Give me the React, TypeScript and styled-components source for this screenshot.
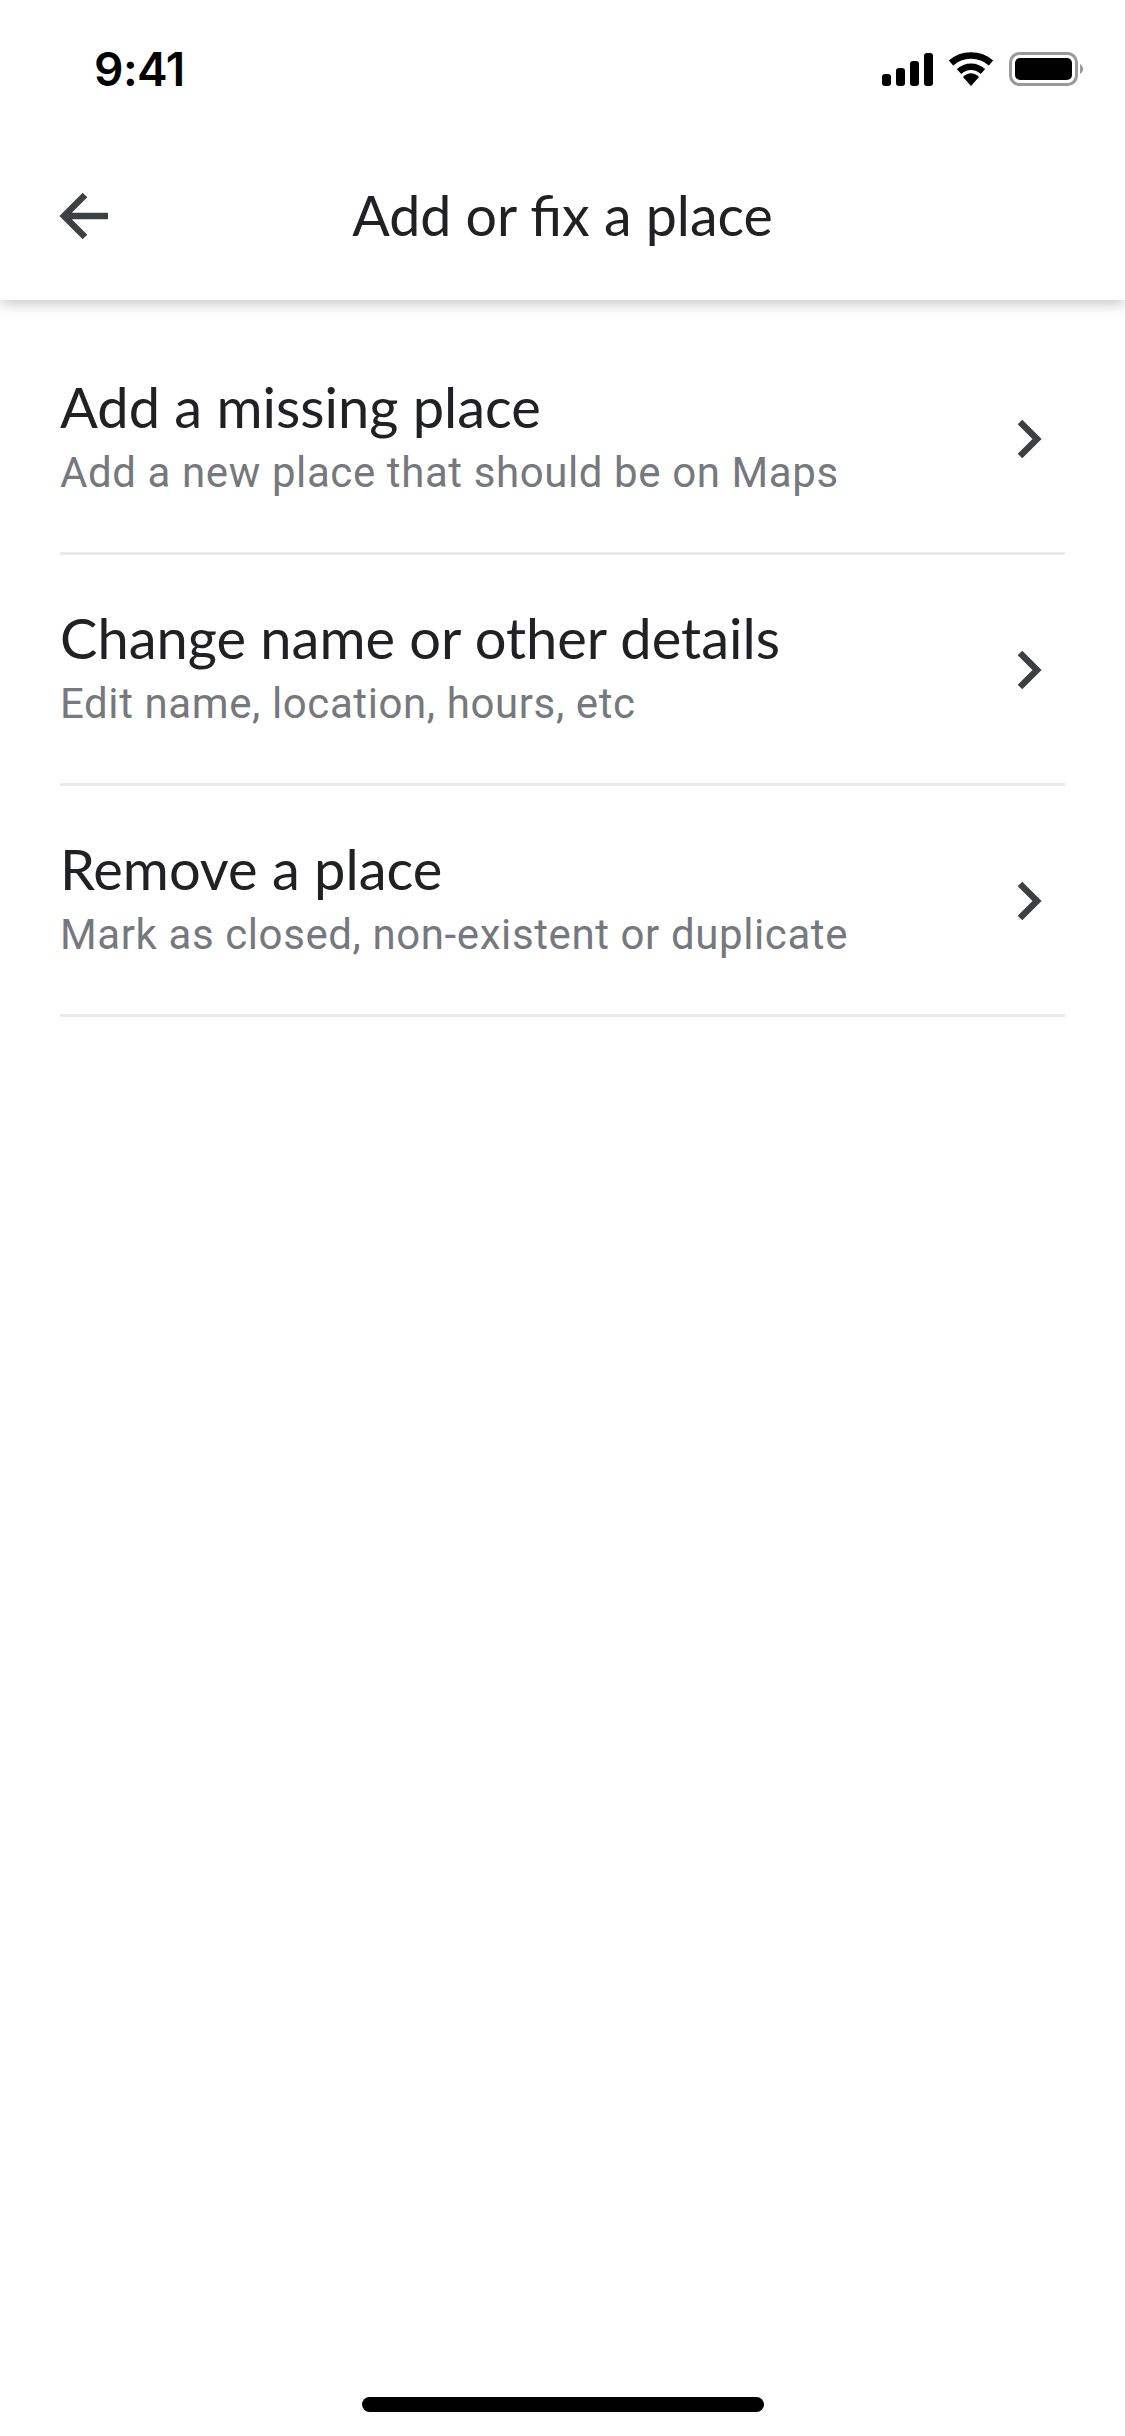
import { FunctionComponent } from 'react'
import styled, { createGlobalStyle } from 'styled-components'

const GlobalStyle = createGlobalStyle`
  html, body {
    margin: 0;
    padding: 0;
    background: #fff;
  }
`

const Screen = styled.div`
  width: 1125px;
  height: 2436px;
  background: #fff;
  display: flex;
  flex-direction: column;
  overflow: hidden;
`

const Header = styled.header`
  height: 300px;
  flex: none;
  display: flex;
  flex-direction: column;
  background: #fff;
  box-shadow: 0 3px 14px rgba(60, 64, 67, 0.32);
  position: relative;
`

const StatusBar = styled.div`
  height: 126px;
  padding: 6px 42px 0 94px;
  display: flex;
  align-items: center;
  justify-content: space-between;
`

const Clock = styled.span`
  font-family: Inter, 'Liberation Sans', sans-serif;
  font-size: 46px;
  font-weight: 600;
  color: #000;
  letter-spacing: -0.5px;
`

const StatusIcons = styled.div`
  display: flex;
  align-items: center;
  gap: 15px;
`

const TitleBar = styled.div`
  flex: 1;
  display: flex;
  align-items: center;
  justify-content: center;
  position: relative;
  padding-bottom: 3px;
`

const BackButton = styled.button`
  position: absolute;
  left: 54px;
  top: 54px;
  width: 60px;
  height: 60px;
  padding: 0;
  border: 0;
  background: none;
`

const Title = styled.h1`
  margin: 0;
  font-family: Lato, 'Open Sans', sans-serif;
  font-size: 55.5px;
  font-weight: 400;
  color: #202124;
`

const List = styled.div`
  display: flex;
  flex-direction: column;
  padding: 0 60px;
  flex: 1;
`

const Row = styled.div`
  height: 231px;
  box-sizing: border-box;
  border-bottom: 3px solid #e8eaed;
  display: flex;
  align-items: center;
  justify-content: space-between;
`

const RowFirst = styled(Row)`
  height: 255px;
  padding-top: 24px;
`

const RowText = styled.div`
  display: flex;
  flex-direction: column;
  padding-bottom: 5px;
`

const RowTitle = styled.div`
  font-family: Lato, 'Open Sans', sans-serif;
  font-size: 56px;
  line-height: 68px;
  color: #202124;
`

const RowSubtitle = styled.div`
  margin-top: 6px;
  font-family: Roboto, sans-serif;
  font-size: 42px;
  line-height: 52px;
  letter-spacing: 0.6px;
  color: #75797e;
`

const Chevron = styled.svg`
  width: 60px;
  height: 60px;
  flex: none;
  margin-right: 7px;
`

const HomeBar = styled.div`
  flex: none;
  align-self: center;
  width: 402px;
  height: 15px;
  margin-bottom: 24px;
  border-radius: 8px;
  background: #000;
`

const ChevronIcon: FunctionComponent = () => (
  <Chevron viewBox="0 0 60 60">
    <path d="M22 14 L39 31 L22 48" fill="none" stroke="#3c4043" strokeWidth="6.5" />
  </Chevron>
)

const items = [
  { title: 'Add a missing place', subtitle: 'Add a new place that should be on Maps' },
  { title: 'Change name or other details', subtitle: 'Edit name, location, hours, etc' },
  { title: 'Remove a place', subtitle: 'Mark as closed, non-existent or duplicate' },
]

const App: FunctionComponent = () => (
  <Screen>
    <GlobalStyle />
    <Header>
      <StatusBar>
        <Clock>9:41</Clock>
        <StatusIcons>
          <svg width="51" height="33" viewBox="0 0 51 33">
            <rect x="0" y="21" width="9" height="12" rx="3" />
            <rect x="14" y="15" width="9" height="18" rx="3" />
            <rect x="28" y="8" width="9" height="25" rx="3" />
            <rect x="42" y="0" width="9" height="33" rx="3" />
          </svg>
          <svg width="46" height="34" viewBox="0 0 46 34">
            <path d="M3 11 C14 1 32 1 43 11" fill="none" stroke="#000" strokeWidth="6.5" />
            <path d="M11 19.5 C18 13 28 13 35 19.5" fill="none" stroke="#000" strokeWidth="6.5" />
            <path d="M15 25 C20 20 26 20 31 25 L23 34 Z" />
          </svg>
          <svg width="74" height="34" viewBox="0 0 74 34">
            <rect x="1.5" y="1.5" width="66" height="31" rx="9" fill="none" stroke="#999" strokeWidth="3" />
            <rect x="6" y="6" width="57" height="22" rx="5" />
            <path d="M71 12 C73 13 74 15 74 17 C74 19 73 21 71 22 Z" fill="#999" />
          </svg>
        </StatusIcons>
      </StatusBar>
      <TitleBar>
        <BackButton aria-label="Back">
          <svg width="60" height="60" viewBox="0 0 60 60">
            <path d="M31 9 L10 30 L31 51 M10 30 L54 30" fill="none" stroke="#3c4043" strokeWidth="6.5" />
          </svg>
        </BackButton>
        <Title>Add or fix a place</Title>
      </TitleBar>
    </Header>
    <List>
      {items.map((item, i) => {
        const Wrapper = i === 0 ? RowFirst : Row
        return (
          <Wrapper key={item.title}>
            <RowText>
              <RowTitle>{item.title}</RowTitle>
              <RowSubtitle>{item.subtitle}</RowSubtitle>
            </RowText>
            <ChevronIcon />
          </Wrapper>
        )
      })}
    </List>
    <HomeBar />
  </Screen>
)

export default App
